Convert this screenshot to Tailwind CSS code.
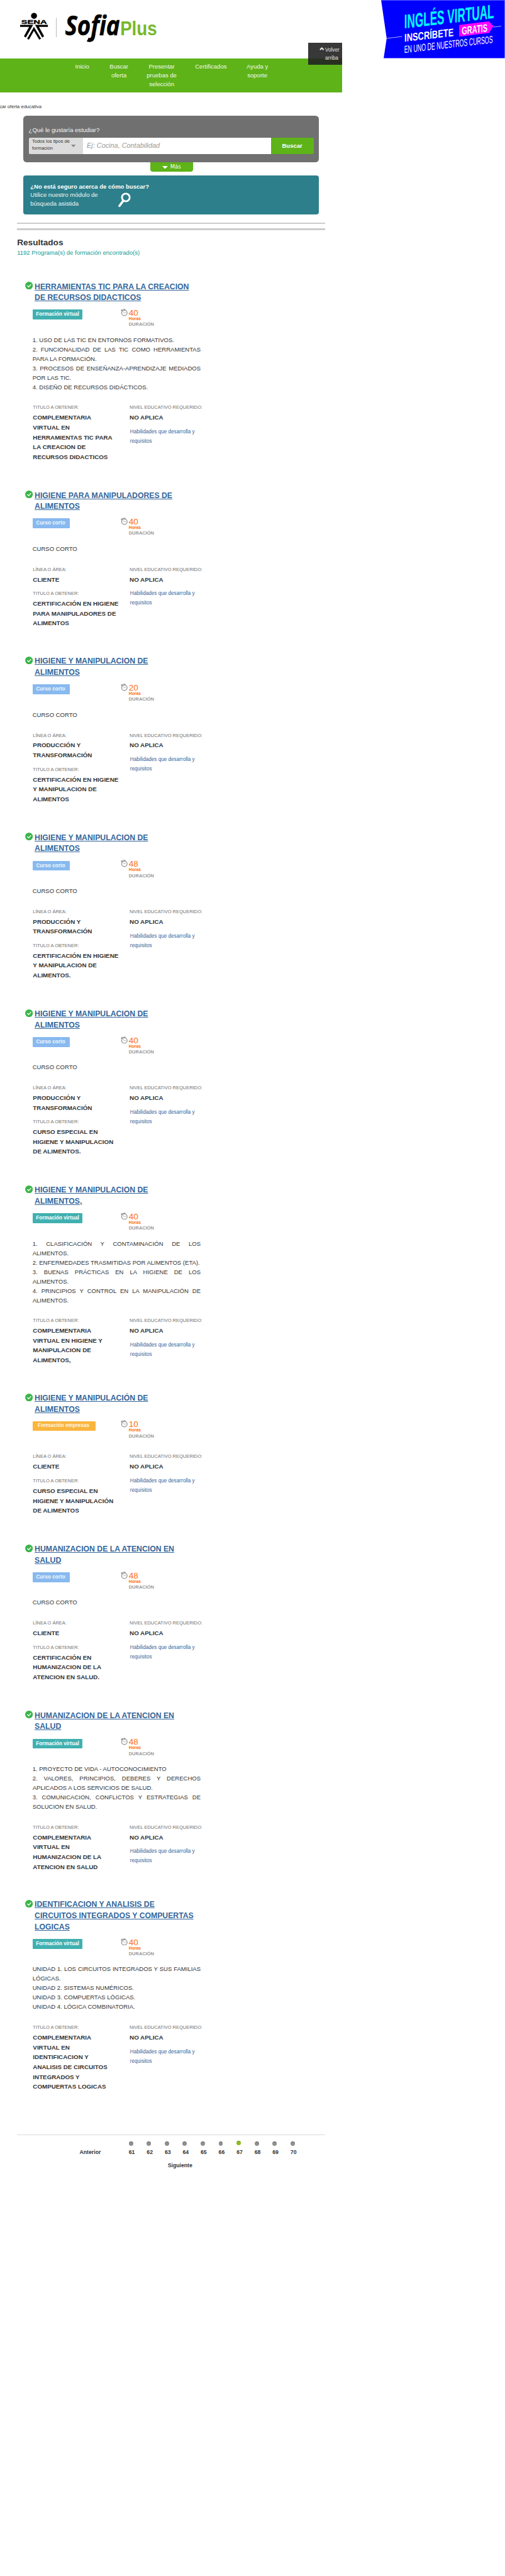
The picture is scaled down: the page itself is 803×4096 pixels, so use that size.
<!DOCTYPE html>
<html lang="es">
<head>
<meta charset="utf-8">
<title>SofiaPlus - Buscar oferta educativa</title>
<script src="https://cdn.jsdelivr.net/npm/@tailwindcss/browser@4"></script>
</head>
<body class="bg-white overflow-x-hidden">
<div class="[zoom:0.6803] relative w-[1180px] h-[6020px] overflow-hidden bg-white text-[#333] font-['Liberation_Sans',Arial,sans-serif]">

  <header class="flex justify-between h-[136px]">
    <svg class="w-[400px] h-[136px] shrink-0" viewBox="0 0 400 136">
      <circle cx="79.5" cy="37" r="7"/>
      <text x="49.5" y="55.6" font-family="Liberation Sans" font-weight="700" font-size="13.3" textLength="60" lengthAdjust="spacingAndGlyphs" stroke="#000" stroke-width=".5">SENA</text>
      <g transform="scale(.33333)">
        <polygon points="141,174 232,174 181,263 168,255 204,188 141,188"/>
        <polygon points="246,174 336,174 336,188 273,188 309,254 296,263"/>
        <polygon points="238,188 288,271 275,278 238,216 203,278 190,272"/>
      </g>
      <rect x="131" y="42" width="1" height="45" fill="#999"/>
      <text x="152" y="83" font-family="Open Sans" font-weight="700" font-style="italic" font-size="63" textLength="128" lengthAdjust="spacingAndGlyphs" stroke="#000" stroke-width=".8">Sofia</text>
      <path d="M219.5 80 C218 91 215 95.500 209 95 Q206.500 94.800 204.500 93.500" fill="none" stroke="#000" stroke-width="6.500"/>
      <text x="281" y="82.700" font-family="Liberation Sans" font-weight="700" font-size="46" textLength="86" lengthAdjust="spacingAndGlyphs" fill="#76b82a">Plus</text>
    </svg>
    <svg class="w-[289px] h-[136px] shrink-0" viewBox="891 0 289 136">
      <polygon points="891,0 1180,0 1180,136 897,136 904,89.700" fill="#00f"/>
      <rect x="891" y="0" width="289" height="1" fill="#7f7fff"/>
      <path d="M904 89.700 940 85.300M1153 63.300 1171.700 61.200" stroke="#fff" stroke-width="1"/>
      <polygon points="1073.300,58.300 1143,50 1153.500,61 1143,77 1073.300,85.700" fill="#f0f"/>
      <g font-family="Liberation Sans Narrow, Liberation Sans" fill="#fff">
        <text transform="matrix(1 -.115 0 1 945 66.500)" font-size="46" font-weight="700" textLength="210" lengthAdjust="spacingAndGlyphs" fill="#0ff">INGLÉS VIRTUAL</text>
        <text transform="matrix(1 -.115 0 1 945.500 97.300)" font-size="25.500" font-weight="700" textLength="115" lengthAdjust="spacingAndGlyphs">INSCRÍBETE</text>
        <text transform="matrix(1 -.115 0 1 1079.500 80.800)" font-size="25.500" font-weight="700" textLength="60" lengthAdjust="spacingAndGlyphs">GRATIS</text>
        <text transform="matrix(1 -.115 0 1 945 124)" font-size="24" textLength="207" lengthAdjust="spacingAndGlyphs">EN UNO DE NUESTROS CURSOS</text>
      </g>
    </svg>
  </header>

  <nav class="flex w-[800px] h-[80px] bg-[#5eb318] pt-[10px] pl-[142px] text-[14px] leading-[20px] text-[#f3faee] text-center whitespace-nowrap">
    <a class="w-[100px]">Inicio</a>
    <a class="w-[72px]">Buscar<br>oferta</a>
    <a class="w-[128px]">Presentar<br>pruebas de<br>selección</a>
    <a class="w-[102px]">Certificados</a>
    <a class="w-[115px]">Ayuda y<br>soporte</a>
  </nav>
  <a class="absolute left-[720px] top-[100px] w-[80px] h-[52px] bg-[#222]/90 pt-[7px] pl-[40px] text-[12px] leading-[20px] text-[#e4e4e4]">
    <svg class="absolute left-[27px] top-[10px] w-[11px] h-[8px]" viewBox="0 0 11 8"><path d="M1.200 6.200 5.500 2 9.800 6.200" fill="none" stroke="#eee" stroke-width="2.800"/></svg>
    Volver<br>arriba
  </a>

  <div class="flex justify-end w-[97px] h-[16px] mt-[26px] overflow-hidden whitespace-nowrap text-[11.2px] leading-[16px]"><span>Buscar oferta educativa</span></div>

  <main class="w-[800px]">
    <section class="mt-[12px] ml-[55px] w-[690px] h-[110px] rounded-[8px] bg-[#707070] px-[12px] pt-[24px]">
      <div class="text-[14px] leading-[20px] text-[#f2f2f2]">¿Qué le gustaría estudiar?</div>
      <div class="flex mt-[8px] h-[38px]">
        <div class="flex items-center justify-between w-[127px] bg-[#dcdcdc] rounded-l-[3px] pl-[8px] pr-[17.5px] text-[11px] leading-[16px]">
          <span class="whitespace-nowrap -mt-[2px]">Todos los tipos de<br>formación</span>
          <svg class="w-[11px] h-[6px] shrink-0" viewBox="0 0 11 6"><path d="M0 0H11L5.500 6z" fill="#888"/></svg>
        </div>
        <div class="w-[439px] bg-white pl-[9px] text-[16px] leading-[37px] italic text-[#999]">Ej: Cocina, Contabilidad</div>
        <div class="w-[100px] bg-[#5eb318] rounded-r-[3px] text-center text-[14px] leading-[38px] font-bold text-white">Buscar</div>
      </div>
    </section>
    <div class="flex items-center gap-[6px] ml-[352px] w-[100px] h-[22px] rounded-b-[6px] bg-[#5eb318] pl-[27px] text-[12.5px] leading-[22px] text-white">
      <svg class="w-[13px] h-[7px]" viewBox="0 0 13 7"><path d="M0 0H13L6.500 7z" fill="#fff"/></svg><span class="font-['DejaVu_Sans']">Más</span>
    </div>
    <section class="flex mt-[8px] ml-[55px] w-[690px] h-[92px] rounded-[6px] bg-[#2d7f8b] pl-[16px] pt-[16px] text-[14px] leading-[20px] text-[#eef6f7]">
      <p class="w-[205px] whitespace-nowrap"><b class="text-white">¿No está seguro acerca de cómo buscar?</b><br>Utilice nuestro módulo de<br>búsqueda asistida</p>
      <svg class="mt-[24px] w-[30px] h-[36px]" viewBox="0 0 30 36"><circle cx="17.700" cy="11.700" r="9" fill="none" stroke="#fff" stroke-width="4.200"/><path d="M12 19 2.800 31.500" stroke="#fff" stroke-width="5.200" stroke-linecap="round"/></svg>
    </section>
    <div class="ml-[40px] w-[720px] mt-[18px] h-[4px] bg-[#ccc]"></div>
    <div class="ml-[40px] w-[720px] mt-[10px] h-[4px] bg-[#ccc]"></div>

    <div class="ml-[40px] mt-[15px] h-[105px]">
      <h1 class="text-[20px] leading-[28px] font-bold">Resultados</h1>
      <p class="text-[14px] leading-[22px] text-[#0f9d97]">1192 Programa(s) de formación encontrado(s)</p>
    </div>

    <div id="lista"></div>

    <div class="ml-[40px] w-[720px] h-px bg-[#dcdcdc]"></div>
    <div class="flex mt-[14px] ml-[186px] text-[12.8px] leading-[20px] font-bold">
      <span class="w-[115px] mt-[18px]">Anterior</span>
      <div id="paginas" class="flex"></div>
    </div>
    <div class="mt-[10px] ml-[392px] text-[12.8px] leading-[20px] font-bold">Siguiente</div>
  </main>
</div>

<script>
const badges = {
  virtual: '<span class="w-[115px] h-[23px] mt-[2px] rounded-[2px] bg-[#41b0b0] text-center text-[12px] leading-[23px] font-bold text-white">Formación virtual</span>',
  corto: '<span class="w-[86px] h-[23px] mt-[2px] rounded-[2px] bg-[#88b9ef] pr-[3px] text-center text-[12px] leading-[23px] font-bold text-[#f2f7fd]">Curso corto</span>',
  empresas: '<span class="w-[146px] h-[23px] mt-[2px] rounded-[2px] bg-[#f9b53e] pr-[3px] text-center text-[12px] leading-[22px] font-bold text-[#fff6e4]">Formación empresas</span>'
};
const corto = ['CURSO CORTO'];
const prod = 'PRODUCCIÓN Y<br>TRANSFORMACIÓN';
// alto, título, insignia, horas, descripción, línea, título a obtener
const items = [
  [488, 'HERRAMIENTAS TIC PARA LA CREACION<br>DE RECURSOS DIDACTICOS', 'virtual', 40, ['1. USO DE LAS TIC EN ENTORNOS FORMATIVOS.', '=2. FUNCIONALIDAD DE LAS TIC COMO HERRAMIENTAS', 'PARA LA FORMACIÓN.', '=3. PROCESOS DE ENSEÑANZA-APRENDIZAJE MEDIADOS', 'POR LAS TIC.', '4. DISEÑO DE RECURSOS DIDÁCTICOS.'], '', 'COMPLEMENTARIA<br>VIRTUAL EN<br>HERRAMIENTAS TIC PARA<br>LA CREACION DE<br>RECURSOS DIDACTICOS'],
  [388, 'HIGIENE PARA MANIPULADORES DE<br>ALIMENTOS', 'corto', 40, corto, 'CLIENTE', 'CERTIFICACIÓN EN HIGIENE<br>PARA MANIPULADORES DE<br>ALIMENTOS'],
  [412, 'HIGIENE Y MANIPULACION DE<br>ALIMENTOS', 'corto', 20, corto, prod, 'CERTIFICACIÓN EN HIGIENE<br>Y MANIPULACION DE<br>ALIMENTOS'],
  [412, 'HIGIENE Y MANIPULACION DE<br>ALIMENTOS', 'corto', 48, corto, prod, 'CERTIFICACIÓN EN HIGIENE<br>Y MANIPULACION DE<br>ALIMENTOS.'],
  [412, 'HIGIENE Y MANIPULACION DE<br>ALIMENTOS', 'corto', 40, corto, prod, 'CURSO ESPECIAL EN<br>HIGIENE Y MANIPULACION<br>DE ALIMENTOS.'],
  [486, 'HIGIENE Y MANIPULACION DE<br>ALIMENTOS,', 'virtual', 40, ['=1. CLASIFICACIÓN Y CONTAMINACIÓN DE LOS', 'ALIMENTOS.', '2. ENFERMEDADES TRASMITIDAS POR ALIMENTOS (ETA).', '=3. BUENAS PRÁCTICAS EN LA HIGIENE DE LOS', 'ALIMENTOS.', '=4. PRINCIPIOS Y CONTROL EN LA MANIPULACIÓN DE', 'ALIMENTOS.'], '', 'COMPLEMENTARIA<br>VIRTUAL EN HIGIENE Y<br>MANIPULACION DE<br>ALIMENTOS,'],
  [353, 'HIGIENE Y MANIPULACIÓN DE<br>ALIMENTOS', 'empresas', 10, [], 'CLIENTE', 'CURSO ESPECIAL EN<br>HIGIENE Y MANIPULACIÓN<br>DE ALIMENTOS'],
  [389, 'HUMANIZACION DE LA ATENCION EN<br>SALUD', 'corto', 48, corto, 'CLIENTE', 'CERTIFICACIÓN EN<br>HUMANIZACION DE LA<br>ATENCION EN SALUD.'],
  [442, 'HUMANIZACION DE LA ATENCION EN<br>SALUD', 'virtual', 48, ['1. PROYECTO DE VIDA - AUTOCONOCIMIENTO', '=2. VALORES, PRINCIPIOS, DEBERES Y DERECHOS', 'APLICADOS A LOS SERVICIOS DE SALUD.', '=3. COMUNICACION, CONFLICTOS Y ESTRATEGIAS DE', 'SOLUCION EN SALUD.'], '', 'COMPLEMENTARIA<br>VIRTUAL EN<br>HUMANIZACION DE LA<br>ATENCION EN SALUD'],
  [549, 'IDENTIFICACION Y ANALISIS DE<br>CIRCUITOS INTEGRADOS Y COMPUERTAS<br>LOGICAS', 'virtual', 40, ['=UNIDAD 1. LOS CIRCUITOS INTEGRADOS Y SUS FAMILIAS', 'LÓGICAS.', 'UNIDAD 2. SISTEMAS NUMÉRICOS.', 'UNIDAD 3. COMPUERTAS LÓGICAS.', 'UNIDAD 4. LÓGICA COMBINATORIA.'], '', 'COMPLEMENTARIA<br>VIRTUAL EN<br>IDENTIFICACION Y<br>ANALISIS DE CIRCUITOS<br>INTEGRADOS Y<br>COMPUERTAS LOGICAS']
];
document.getElementById('lista').innerHTML = items.map(([h, title, badge, hours, desc, line, degree]) => `
<article class="pl-[59px] whitespace-nowrap" style="height:${h}px">
  <div class="flex">
    <svg class="w-[18px] h-[18px] mt-px mr-[4px] shrink-0" viewBox="0 0 18 18"><circle cx="9" cy="9" r="9" fill="#39b54a"/><path d="M4.800 9 8.300 12.300 13.700 6.300" fill="none" stroke="#fff" stroke-width="2"/></svg>
    <h2 class="text-[18px] leading-[26px] font-bold text-[#33669a] underline decoration-1 underline-offset-2">${title}</h2>
  </div>
  <div class="flex mt-[12px] pl-[18px] h-[44px]">
    <div class="flex w-[205px]">${badges[badge]}</div>
    <svg class="w-[16px] h-[17px] mr-[3px] shrink-0" viewBox="0 0 16 17" fill="none" stroke="#8e8e8e"><circle cx="8.500" cy="9.500" r="6.400" stroke-width="1.800"/><path d="M4.500 6.500 8 9.500 12 9" stroke-width="1"/><path d="M.500 4.500 4.500 1.500M6 1.700 11 1.700M8.500 1V3M2 3 4 5" stroke-width="2"/></svg>
    <div>
      <div class="text-[20px] leading-[20px] text-[#ff6e10]">${hours}</div>
      <div class="-mt-px text-[10px] leading-[10px] font-bold text-[#ff6e10]">Horas</div>
      <div class="mt-px text-[11px] leading-[14px] font-bold text-[#999]">DURACIÓN</div>
    </div>
  </div>
  ${desc.length ? `<div class="mt-[19px] ml-[17px] mb-[26px] w-[393px] text-[14px] leading-[22px]">${desc.map(d => d[0] === '=' ? `<p class="whitespace-normal [text-align-last:justify]">${d.slice(1)}</p>` : `<p>${d}</p>`).join('')}</div>` : '<div class="h-[31px]"></div>'}
  <div class="flex pl-[18px]">
    <dl class="w-[226px]">
      ${line ? `<dt class="text-[11px] leading-[22px] text-[#707070]">LÍNEA O ÁREA:</dt><dd class="mb-[11.5px] text-[14.4px] leading-[23px] font-bold">${line}</dd>` : ''}
      <dt class="text-[11px] leading-[22px] text-[#707070]">TITULO A OBTENER:</dt>
      <dd class="text-[14.4px] leading-[23px] font-bold">${degree}</dd>
    </dl>
    <div>
      <div class="text-[11px] leading-[22px] text-[#707070]">NIVEL EDUCATIVO REQUERIDO:</div>
      <div class="text-[14.4px] leading-[23px] font-bold">NO APLICA</div>
      <a class="block mt-[12px] ml-px text-[12px] leading-[22px] text-[#33669a]">Habilidades que desarrolla y<br>requisitos</a>
    </div>
  </div>
</article>`).join('');

document.getElementById('paginas').innerHTML = [61,62,63,64,65,66,67,68,69,70].map(n => `
<div class="w-[42px]">${n === 67
  ? '<i class="block w-[10px] h-[10px] rounded-full bg-[#8fbc1e] border-t border-[#6c9210] mb-[8px]"></i>'
  : '<i class="block w-[10px] h-[10px] rounded-full bg-[#8f8f8f] border-t border-[#6a6a6a] mt-px mb-[7px]"></i>'}${n}</div>`).join('');
</script>
</body>
</html>
